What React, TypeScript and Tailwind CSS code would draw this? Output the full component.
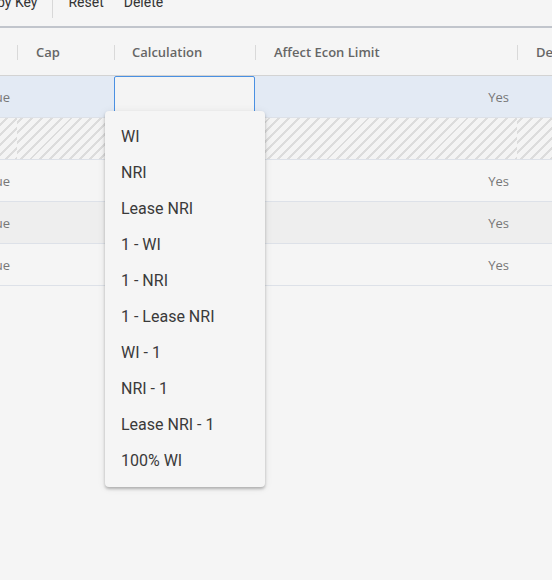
/**
 * Assumptions grid — Calculation column in edit mode with the select menu open.
 */

const CALC_OPTIONS = [
  'WI',
  'NRI',
  'Lease NRI',
  '1 - WI',
  '1 - NRI',
  '1 - Lease NRI',
  'WI - 1',
  'NRI - 1',
  'Lease NRI - 1',
  '100% WI',
];

type Row = { kind: 'selected' | 'hatched' | 'plain' | 'alt' };

const ROWS: Row[] = [
  { kind: 'selected' },
  { kind: 'hatched' },
  { kind: 'plain' },
  { kind: 'alt' },
  { kind: 'plain' },
];

const HATCH =
  'bg-[repeating-linear-gradient(-45deg,#dcdcdc_0px,#dcdcdc_2px,#f4f4f4_2px,#f4f4f4_7px)]';

export default function App() {
  return (
    <div
      className="relative w-[552px] h-[580px] overflow-hidden bg-[#f5f5f5]"
      style={{ fontFamily: '"Open Sans", "Liberation Sans", sans-serif' }}
    >
      <Toolbar />
      <Header />
      {ROWS.map((r, i) => (
        <GridRow key={i} row={r} />
      ))}
      <CalcMenu />
    </div>
  );
}

function Toolbar() {
  return (
    <div className="h-[28px] border-b-2 border-[#c1c5cc] overflow-hidden">
      <div
        className="flex items-start mt-[-9px] text-[14px] text-[#333]"
        style={{ fontFamily: 'Roboto, "Liberation Sans", sans-serif' }}
      >
        <span className="ml-[-3px] leading-[22px]">by Key</span>
        <span className="ml-[15px] w-px h-[27px] bg-[#d8d8d8]" />
        <span className="ml-[15px] leading-[22px]">Reset</span>
        <span className="ml-[20px] leading-[22px]">Delete</span>
      </div>
    </div>
  );
}

function Sep() {
  return <span className="w-px h-[15px] bg-[#d9d9d9] shrink-0 mt-[2px]" />;
}

function Header() {
  return (
    <div className="flex items-center h-[48px] border-b border-[#d3d3d3] text-[13px] font-semibold text-[#666]">
      <div className="w-[17px] shrink-0" />
      <Sep />
      <div className="w-[96px] shrink-0 pl-[18px] pt-[3px]">Cap</div>
      <Sep />
      <div className="w-[140px] shrink-0 pl-[17px] pt-[3px]">Calculation</div>
      <Sep />
      <div className="w-[261px] shrink-0 pl-[18px] pt-[3px]">Affect Econ Limit</div>
      <Sep />
      <div className="pl-[18px] pt-[3px] whitespace-nowrap">Description</div>
    </div>
  );
}

function GridRow({ row }: { row: Row }) {
  const bg =
    row.kind === 'selected' ? 'bg-[#e3eaf4]' : row.kind === 'alt' ? 'bg-[#eeeeee]' : 'bg-[#f5f5f5]';

  if (row.kind === 'hatched') {
    return (
      <div className="flex h-[42px] border-b border-[#dde1e8]">
        <div className={`w-[17px] shrink-0 ${HATCH}`} />
        <div className={`w-[500px] shrink-0 ${HATCH}`} />
        <div className={`flex-1 ${HATCH}`} />
      </div>
    );
  }

  return (
    <div className={`relative flex items-center h-[42px] border-b border-[#dde1e8] text-[13px] text-[#777] ${bg}`}>
      <div className="w-[17px] shrink-0 flex justify-end overflow-hidden pr-[7px] pt-[2px]">
        <span className="whitespace-nowrap">True</span>
      </div>
      <div className="w-[97px] shrink-0" />
      <div className="w-[141px] shrink-0 self-stretch">
        {row.kind === 'selected' && (
          <div className="h-[42px] border border-[#4a90e2] rounded-t-[2px] bg-[#f4f4f4]" />
        )}
      </div>
      <div className="w-[262px] shrink-0 flex justify-end pr-[8px] pt-[2px]">Yes</div>
      <div className="flex-1" />
    </div>
  );
}

function CalcMenu() {
  return (
    <div
      className="absolute left-[105px] top-[111px] w-[160px] py-[8px] rounded-[4px] bg-[#f5f5f5] shadow-[0_2px_3px_rgba(0,0,0,0.25),0_1px_8px_rgba(0,0,0,0.08)]"
      style={{ fontFamily: 'Roboto, "Liberation Sans", sans-serif' }}
    >
      {CALC_OPTIONS.map((o) => (
        <div key={o} className="h-[36px] flex items-center pl-[16px] text-[16px] text-[#3a3a3a]">
          {o}
        </div>
      ))}
    </div>
  );
}
